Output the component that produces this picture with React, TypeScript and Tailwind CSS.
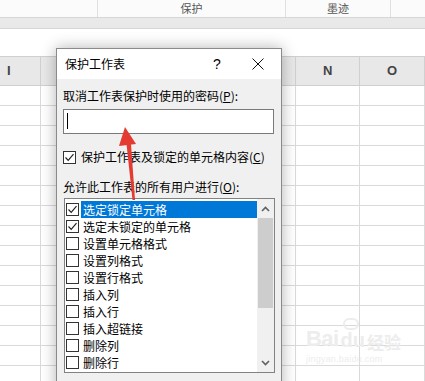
import React from "react";

const CJK = { fontFamily: '"Noto Sans CJK SC", "Noto Sans", sans-serif' };

function Check({ checked }: { checked: boolean }) {
  return (
    <div className="w-[13px] h-[13px] border border-[#333333] bg-white flex items-center justify-center shrink-0">
      {checked && (
        <svg width="11" height="11" viewBox="0 0 11 11">
          <polyline points="1.5,5.5 4.2,8.3 9.5,2.2" fill="none" stroke="#222" strokeWidth="1.2" />
        </svg>
      )}
    </div>
  );
}

const items: [string, boolean][] = [
  ["选定锁定单元格", true],
  ["选定未锁定的单元格", true],
  ["设置单元格格式", false],
  ["设置列格式", false],
  ["设置行格式", false],
  ["插入列", false],
  ["插入行", false],
  ["插入超链接", false],
  ["删除列", false],
  ["删除行", false],
];

const cols: [string, string][] = [
  ["I", "w-[41px]"],
  ["", "w-[64px]"],
  ["", "w-[64px]"],
  ["", "w-[64px]"],
  ["", "w-[64px]"],
  ["N", "w-[64px]"],
  ["O", "w-[65px]"],
];

export default function App() {
  return (
    <div className="relative w-[425px] h-[381px] overflow-hidden bg-white" style={CJK}>
      {/* Ribbon */}
      <div className="h-[18px] border-b border-[#d6d6d6] bg-[#fbfbfb] flex text-[11px] text-[#555] leading-[17px]">
        <div className="w-[98px] border-r border-[#e0e0e0]" />
        <div className="w-[188px] border-r border-[#e0e0e0] text-center">保护</div>
        <div className="w-[105px] border-r border-[#e0e0e0] text-center">墨迹</div>
        <div className="flex-1" />
      </div>
      <div className="h-[11px] bg-[#e9e9e9] border-b border-[#d6d6d6]" />
      <div className="h-[27px] bg-white" />
      {/* header */}
      <div className="h-[30px] border-t border-b border-[#cfcfcf] bg-[#e8e8e8] flex" style={{ fontFamily: '"Liberation Sans", Arial, sans-serif' }}>
        {cols.map(([l, w], i) => (
          <div
            key={i}
            className={`${w} border-r border-[#d0d0d0] flex items-center ${i === 0 ? "justify-start pl-[7px]" : "justify-center"} text-[13px] font-bold text-[#444]`}
          >
            {l}
          </div>
        ))}
      </div>
      {Array.from({ length: 15 }).map((_, r) => (
        <div key={r} className="h-[20px] border-b border-[#dadada] flex">
          {cols.map(([, w], i) => (
            <div key={i} className={`${w} border-r border-[#dadada]`} />
          ))}
        </div>
      ))}

      {/* Watermark */}
      <div className="absolute left-[306px] top-[328px] text-[#ededed] select-none" style={{ fontFamily: '"Liberation Sans", Arial, sans-serif' }}>
        <div className="flex items-end leading-none">
          <span className="text-[22px] font-bold tracking-tight">Bai</span>
          <span className="relative text-[20px] font-bold ml-[2px]">
            du
            <span className="absolute left-[2px] -top-[12px] w-[16px] h-[12px] rounded-full border-2 border-[#ededed]" />
          </span>
          <span className="text-[17px] font-bold ml-[2px]" style={CJK}>经验</span>
        </div>
        <div className="text-[9px] mt-[3px] tracking-wide">jingyan.baidu.com</div>
      </div>

      {/* Dialog */}
      <div className="absolute left-[56px] top-[48px] w-[226px] h-[345px] border border-[#8a8a8a] bg-[#f0f0f0] shadow-[0_0_14px_rgba(0,0,0,0.3)] flex flex-col">
        <div className="h-[30px] bg-white flex items-center text-[12px] text-black shrink-0">
          <span className="pl-[8px] flex-1">保护工作表</span>
          <span className="w-[20px] text-center text-[14px] mr-[25px]" style={{ fontFamily: '"Liberation Sans", Arial, sans-serif' }}>?</span>
          <span className="w-[12px] h-[12px] mr-[17px] flex items-center justify-center">
            <svg width="12" height="12" viewBox="0 0 12 12">
              <path d="M0.5 0.5 L11.5 11.5 M11.5 0.5 L0.5 11.5" stroke="#111" strokeWidth="1" fill="none" />
            </svg>
          </span>
        </div>
        <div className="pl-[6px] pr-[7px] pt-[9px] text-[12px] text-black">
          <div className="h-[16px] leading-[16px]">
            取消工作表保护时使用的密码(<span className="underline">P</span>):
          </div>
          <div className="mt-[5px] h-[25px] w-[211px] bg-white border border-[#7a7a7a] relative">
            <div className="absolute left-[3px] top-[3px] w-px h-[16px] bg-black" />
          </div>
          <div className="mt-[15px] h-[16px] flex items-center">
            <Check checked />
            <span className="ml-[5px] leading-[16px]">
              保护工作表及锁定的单元格内容(<span className="underline">C</span>)
            </span>
          </div>
          <div className="mt-[14px] h-[16px] leading-[16px]">
            允许此工作表的所有用户进行(<span className="underline">O</span>):
          </div>
          <div className="mt-[3px] ml-[1px] w-[211px] h-[175px] bg-white border border-[#828282] flex">
            <div className="flex-1 pt-[2px] pl-[1px]">
              {items.map(([t, c], i) => (
                <div key={t} className="h-[17px] flex items-center">
                  <Check checked={c} />
                  <span
                    className={`ml-[2px] pl-[2px] flex-1 h-[17px] leading-[17px] ${i === 0 ? "bg-[#0078d7] text-white" : "text-black"}`}
                  >
                    {t}
                  </span>
                </div>
              ))}
            </div>
            <div className="w-[17px] bg-[#f0f0f0] flex flex-col">
              <div className="h-[19px] flex items-center justify-center">
                <svg width="9" height="6" viewBox="0 0 9 6">
                  <polyline points="1,5 4.5,1.5 8,5" fill="none" stroke="#606060" strokeWidth="1.6" />
                </svg>
              </div>
              <div className="h-[90px] mx-[1px] bg-[#cdcdcd]" />
              <div className="flex-1" />
              <div className="h-[19px] flex items-center justify-center">
                <svg width="9" height="6" viewBox="0 0 9 6">
                  <polyline points="1,1 4.5,4.5 8,1" fill="none" stroke="#606060" strokeWidth="1.6" />
                </svg>
              </div>
            </div>
          </div>
        </div>
      </div>

      {/* red arrow */}
      <svg className="absolute left-0 top-0 pointer-events-none" width="425" height="381" viewBox="0 0 425 381">
        <polygon points="125,127 119,146 136,144" fill="#e33b32" />
        <polygon points="126.5,144 131,144 135,200 132.5,200" fill="#e33b32" />
      </svg>
    </div>
  );
}
